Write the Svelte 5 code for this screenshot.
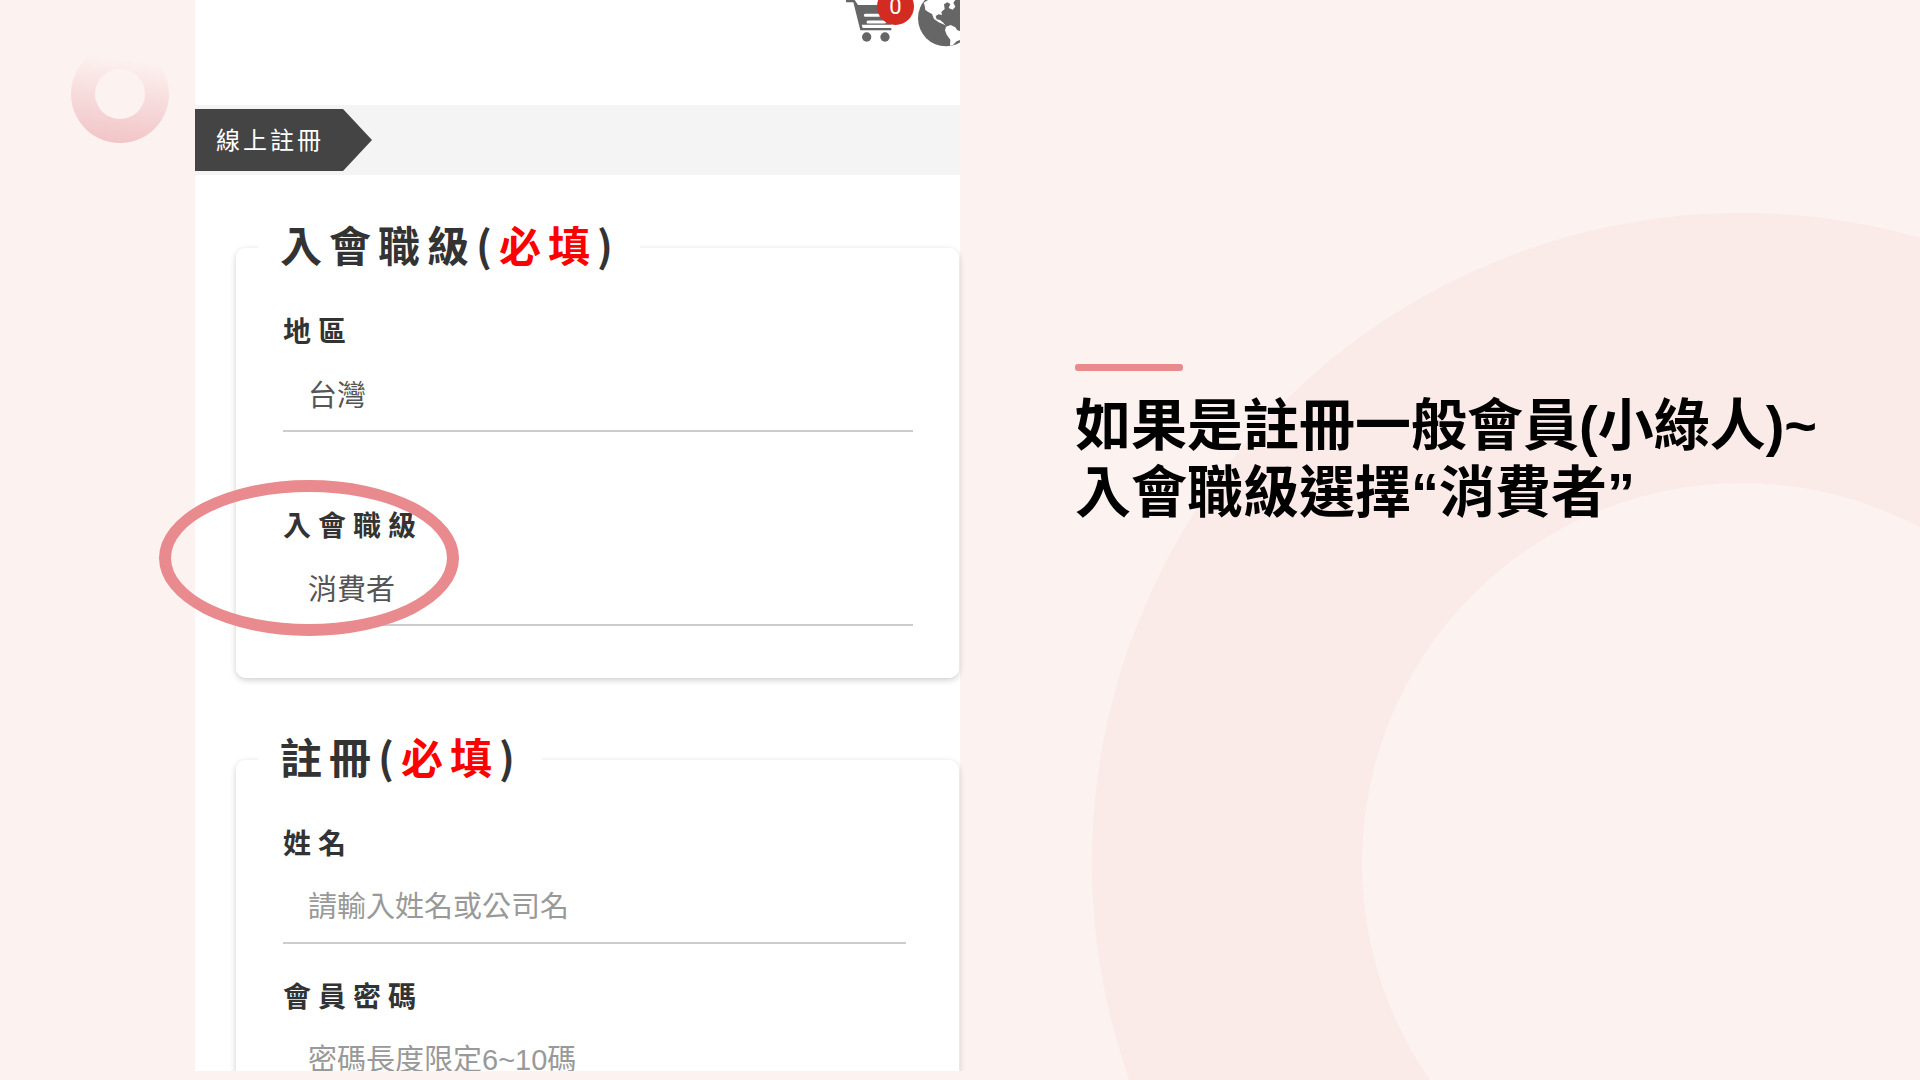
<script>
  const regions = ['台灣'];
  const ranks = ['消費者'];
  let cartCount = $state(0);
</script>

<main class="slide">
  <svg class="big-ring" viewBox="0 0 1300 1300" aria-hidden="true">
    <circle cx="650" cy="650" r="515" />
  </svg>

  <aside class="margin">
    <svg class="small-ring" viewBox="0 0 98 98" aria-hidden="true">
      <defs>
        <linearGradient id="fade" x1="0.56" y1="0" x2="0.44" y2="1">
          <stop offset="0.15" stop-color="#f2c5c7" stop-opacity="0" />
          <stop offset="0.55" stop-color="#f2c5c7" stop-opacity="0.5" />
          <stop offset="1" stop-color="#f2c5c7" />
        </linearGradient>
      </defs>
      <path
        fill="url(#fade)"
        fill-rule="evenodd"
        d="M49 0a49 49 0 1 1 0 98a49 49 0 1 1 0-98zM49 24a25 25 0 1 0 0 50a25 25 0 1 0 0-50z"
      />
    </svg>
  </aside>

  <section class="panel">
    <header class="topbar">
      <button class="icon cart" aria-label="購物車">
        <svg viewBox="0 0 204 130" aria-hidden="true">
          <path d="M0 0H26L36 15H144L136 74H47L50 84H136V91H43L22 7H0Z" fill="#666" />
          <path d="M58 46H98M66 66H116" stroke="#fff" stroke-width="9" stroke-linecap="round" />
          <circle cx="62" cy="111" r="14" fill="#666" />
          <circle cx="117" cy="111" r="14" fill="#666" />
        </svg>
        <span class="badge">{cartCount}</span>
      </button>
      <button class="icon globe" aria-label="語言">
        <svg viewBox="0 0 126 141" aria-hidden="true">
          <circle cx="84" cy="55" r="84" fill="#666" />
          <path
            fill="#fff"
            d="M17 8L30 0H112L106 8L112 20L104 29L92 24L97 12L88 7L78 13L80 27L70 36L72 45L62 43L53 48L56 58L66 60L76 68L83 77L76 73L62 67L48 57L42 42L32 37L22 30L20 17Z"
          />
          <path fill="#fff" d="M84 80L98 75L112 82L118 91L126 93V120L116 124L104 136L96 137L97 119L86 104L81 91Z" />
        </svg>
      </button>
    </header>

    <nav class="crumbs" aria-label="位置">
      <a class="crumb" href="#register">線上註冊</a>
    </nav>

    <form class="form" id="register">
      <fieldset>
        <legend>入會職級(<em>必填</em>)</legend>
        <div class="field spaced">
          <label for="region">地區</label>
          <select id="region">
            {#each regions as r}<option>{r}</option>{/each}
          </select>
        </div>
        <div class="field">
          <label for="rank">入會職級</label>
          <select id="rank">
            {#each ranks as r}<option>{r}</option>{/each}
          </select>
          <span class="marker"></span>
        </div>
      </fieldset>

      <fieldset class="account">
        <legend>註冊(<em>必填</em>)</legend>
        <div class="field">
          <label for="name">姓名</label>
          <input id="name" type="text" placeholder="請輸入姓名或公司名" />
        </div>
        <div class="field">
          <label for="password">會員密碼</label>
          <input id="password" type="password" placeholder="密碼長度限定6~10碼" />
        </div>
      </fieldset>
    </form>
  </section>

  <section class="note">
    <span class="accent"></span>
    <h1>如果是註冊一般會員(小綠人)~<br />入會職級選擇“消費者”</h1>
  </section>
</main>

<style>
  :global(body) {
    background: #fcf2f0;
  }

  .slide {
    position: relative;
    display: grid;
    grid-template-columns: 195fr 765fr 960fr;
    grid-template-rows: minmax(0, 1fr);
    height: 100vh;
    overflow: hidden;
    font-family: 'Noto Sans CJK TC', sans-serif;
    color: #333;
  }

  /* Decorative rings */
  .big-ring {
    position: absolute;
    right: -472px;
    top: 213px;
    width: 1300px;
  }

  .big-ring circle {
    fill: none;
    stroke: #faeae8;
    stroke-width: 270px;
  }

  .margin {
    padding: 45px 26px;
    text-align: right;
  }

  .small-ring {
    width: 98px;
  }

  /* Registration page */
  .panel {
    position: relative;
    min-width: 0;
    margin-bottom: 9px;
    background: #fff;
    overflow-x: visible;
    overflow-y: clip;
  }

  .topbar {
    display: flex;
    justify-content: flex-end;
    gap: 4px;
    height: 105px;
  }

  .icon {
    position: relative;
    align-self: flex-start;
    padding: 0;
    border: 0;
    background: none;
  }

  .icon svg {
    display: block;
  }

  .cart svg {
    width: 68px;
  }

  .globe svg {
    width: 42px;
  }

  .badge {
    position: absolute;
    left: 31px;
    top: -12px;
    width: 37px;
    height: 37px;
    border-radius: 50%;
    background: #d32b22;
    color: #fff;
    font: 22px/38px Roboto, sans-serif;
    text-align: center;
  }

  .crumbs {
    display: flex;
    align-items: center;
    height: 70px;
    background: #f4f4f4;
  }

  .crumb {
    box-sizing: border-box;
    width: 177px;
    padding: 0 0 2px 21px;
    background: #444;
    clip-path: polygon(0 0, 148px 0, 100% 50%, 148px 100%, 0 100%);
    color: #fff;
    font-size: 24px;
    line-height: 60px;
    letter-spacing: 3px;
    text-decoration: none;
  }

  .form {
    padding: 43px 1px 0 41px;
  }

  fieldset {
    min-width: 0;
    margin: 0 0 52px;
    padding: 34px 46px 52px 47px;
    border: 0;
    border-radius: 10px;
    background: #fff;
    box-shadow: 0 2px 6px rgba(0, 0, 0, 0.2);
  }

  .account {
    padding-right: 53px;
  }

  legend {
    margin-left: -25px;
    padding: 0 20px 8px 22px;
    background: #fff;
    font-size: 42px;
    font-weight: 700;
    line-height: 52px;
    letter-spacing: 7px;
  }

  em {
    color: #f00;
    font-style: normal;
  }

  .field {
    position: relative;
    display: flex;
    flex-direction: column;
    gap: 12px;
  }

  .spaced {
    margin-bottom: 74px;
  }

  .account .field {
    margin-bottom: 33px;
  }

  label {
    font-size: 28px;
    font-weight: 700;
    line-height: 36px;
    letter-spacing: 7px;
  }

  select,
  input {
    appearance: none;
    box-sizing: border-box;
    width: 100%;
    height: 72px;
    padding: 1px 25px 0;
    border: 0;
    border-bottom: 2px solid #ccc;
    border-radius: 0;
    outline: 0;
    background: none;
    color: #555;
    font-family: 'Liberation Sans', 'Noto Sans CJK TC', sans-serif;
    font-size: 29px;
  }

  input::placeholder {
    color: #999;
    opacity: 1;
  }

  .marker {
    position: absolute;
    left: -124px;
    top: -26px;
    box-sizing: border-box;
    width: 300px;
    height: 156px;
    border: 12px solid #e88a8e;
    border-radius: 50%;
    pointer-events: none;
  }

  /* Explanation */
  .note {
    position: relative;
    padding: 364px 40px 0 115px;
  }

  .accent {
    display: block;
    width: 108px;
    height: 7px;
    border-radius: 3px;
    background: #e88a8e;
  }

  h1 {
    margin: 21px 0 0;
    color: #000;
    font-family: 'Liberation Sans', 'Noto Sans CJK TC', sans-serif;
    font-size: 56px;
    font-weight: 700;
    line-height: 67px;
    white-space: nowrap;
  }
</style>
